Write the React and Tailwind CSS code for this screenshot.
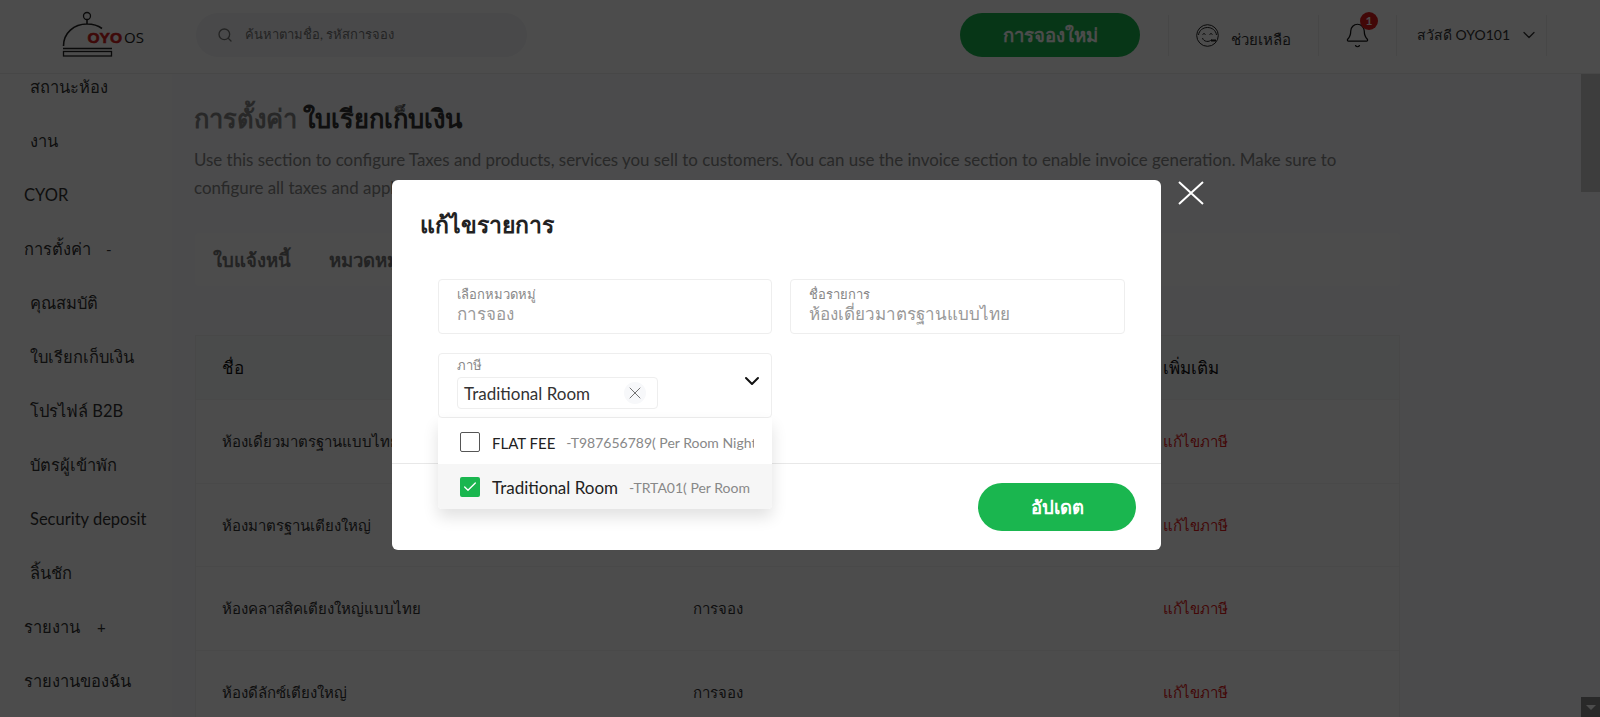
import React from "react";
import { Search, ChevronDown, X, Check, Bell } from "lucide-react";

const F = { fontFamily: '"Lato","Noto Sans","Noto Sans CJK SC",sans-serif' };
const side = [
  ["สถานะห้อง", 1], ["งาน", 1], ["CYOR", 0], ["การตั้งค่า", 0, "-", "ml-[15px]"], ["คุณสมบัติ", 1], ["ใบเรียกเก็บเงิน", 1],
  ["โปรไฟล์ B2B", 1], ["บัตรผู้เข้าพัก", 1], ["Security deposit", 1], ["ลิ้นชัก", 1], ["รายงาน", 0, "+", "ml-[17px]"], ["รายงานของฉัน", 0],
];
const rows = ["ห้องเดี่ยวมาตรฐานแบบไทย", "ห้องมาตรฐานเตียงใหญ่", "ห้องคลาสสิคเตียงใหญ่แบบไทย", "ห้องดีลักซ์เตียงใหญ่"];

function Logo() {
  return (
    <svg width="96" height="60" viewBox="0 0 96 60" className="shrink-0">
      <circle cx="27" cy="11" r="3.5" fill="none" stroke="#222" strokeWidth="1.3" />
      <path d="M27 14.500v4.500M3.500 41C3.500 28 14 19 27 19c6 0 11 1.500 15 4.500" fill="none" stroke="#222" strokeWidth="1.6" />
      <path d="M3 43.500h49" stroke="#222" strokeWidth="1.6" />
      <rect x="3.500" y="46.500" width="48" height="4.500" fill="none" stroke="#222" strokeWidth="1.3" />
      <text x="27.500" y="37.500" fontSize="15.500" fontWeight="700" fill="#d01f1f" stroke="#d01f1f" strokeWidth="0.6" fontFamily="Liberation Sans">OYO</text>
      <text x="64" y="38" fontSize="15" fill="#222" fontFamily="Open Sans">OS</text>
    </svg>
  );
}

export default function App() {
  return (
    <div style={F} className="relative h-[717px] w-[1600px] overflow-hidden bg-[#fafbfd] text-[#333]">
      <header className="relative z-10 flex h-[74px] items-center border-b border-[#eee] bg-white pb-[3px]">
        <div className="ml-[60px] flex w-[136px] shrink-0"><Logo /></div>
        <div className="flex h-[44px] w-[331px] items-center rounded-full bg-[#f4f5f7] pl-[21px] text-[#777]">
          <Search size={16} />
          <span className="ml-[12px] text-[13px]">ค้นหาตามชื่อ, รหัสการจอง</span>
        </div>
        <div className="ml-[433px] flex h-[44px] w-[180px] items-center justify-center rounded-full bg-[#1ab64f] pt-[1px] text-[18.500px] font-bold text-white">การจองใหม่</div>
        <div className="ml-[28px] flex h-[41px] w-[151px] items-center gap-[12px] border-x border-[#eee] pl-[27px]">
          <svg width="23" height="23" viewBox="0 0 23 23" fill="none" stroke="#222" strokeWidth="1">
            <circle cx="11.500" cy="11.500" r="10.800" />
            <path d="M2.500 11C3 6.500 7 3.500 11.500 3.500S20 6.500 20.500 11" />
            <path d="M6.500 10.500q1.500-2 3 0M13.500 10.500q1.500-2 3 0M6.500 14c1 4 7 4.500 9 1.500" />
            <path d="M15 16.500h5" strokeWidth="2" />
          </svg>
          <span className="mt-[8px] text-[15px]">ช่วยเหลือ</span>
        </div>
        <div className="relative flex h-[41px] w-[77px] items-center justify-center">
          <Bell size={27} strokeWidth={1.1} color="#111" />
          <span className="absolute left-[41px] top-[-3px] flex h-[18px] w-[18px] items-center justify-center rounded-full bg-[#dd1c1c] text-[12px] font-bold text-white">1</span>
        </div>
        <div className="flex h-[41px] w-[151px] items-center gap-[9px] border-x border-[#eee] pl-[20px] text-sm">
          <span>สวัสดี OYO101</span>
          <ChevronDown size={20} strokeWidth={1.5} />
        </div>
      </header>

      <div className="flex h-[643px]">
        <aside className="w-[172px] shrink-0 overflow-hidden bg-white">
          <div className="-mt-[14px]">
            {side.map(([t, sub, mark, gap]) => (
              <div key={t} className={`flex h-[54px] items-center text-[16.500px] ${sub ? "pl-[30px]" : "pl-[24px]"}`}>
                <span>{t}</span>
                {mark ? <span className={`${gap} text-[15px]`}>{mark}</span> : null}
              </div>
            ))}
          </div>
        </aside>
        <main className="min-w-0 flex-1 overflow-hidden pl-[22px]">
          <h1 className="mt-[25px] text-[25.500px] font-bold leading-[38px]"><span className="text-[#888]">การตั้งค่า</span> <span>ใบเรียกเก็บเงิน</span></h1>
          <p className="mt-[9px] w-[1170px] text-[16.900px] leading-[28px] text-[#888]">Use this section to configure Taxes and products, services you sell to customers. You can use the invoice section to enable invoice generation. Make sure to configure all taxes and applicable products.</p>
          <div className="ml-[1px] mt-[31px] flex h-[53px] w-[1205px] items-center gap-[38px] rounded bg-white pl-[18px] pt-[3px] text-[18.500px] font-bold text-[#777]">
            <span>ใบแจ้งหนี้</span><span>หมวดหมู่</span>
          </div>
          <div className="ml-[1px] mt-[49px] w-[1205px] border border-[#f2f2f2] bg-white">
            <div className="grid h-[63px] grid-cols-[471px_470px_1fr] items-center bg-[#f9fafb] pl-[26px] text-[17px] text-[#111]">
              <span>ชื่อ</span><span>หมวดหมู่</span><span>เพิ่มเติม</span>
            </div>
            {rows.map((r) => (
              <div key={r} className="grid h-[83.500px] grid-cols-[471px_470px_1fr] items-center border-t border-[#f4f4f4] pl-[26px] text-[15px]">
                <span>{r}</span><span>การจอง</span><span className="text-[#e01c1c]">แก้ไขภาษี</span>
              </div>
            ))}
          </div>
        </main>
        <div className="flex w-[19px] shrink-0 flex-col bg-[#fafbfd]">
          <div className="h-[118px] bg-[#cccccc]" />
          <div className="flex-1" />
          <div className="flex h-[20px] items-center justify-center bg-[#8b8b8b]"><div className="h-0 w-0 border-x-[5px] border-t-[5px] border-x-transparent border-t-white" /></div>
        </div>
      </div>

      <div className="absolute inset-0 z-20 bg-black/70" />

      <button className="absolute left-[1178px] top-[181px] z-30 text-white">
        <svg width="26" height="24" viewBox="0 0 26 24" fill="none" stroke="currentColor" strokeWidth="2"><path d="M1 1l24 22M25 1L1 23" /></svg>
      </button>
      <section className="absolute left-[392px] top-[180px] z-30 flex h-[370px] w-[769px] flex-col rounded-[6px] bg-white">
        <h2 className="ml-[28px] mt-[27px] text-[23px] font-bold leading-[34px] text-[#222]">แก้ไขรายการ</h2>
        <div className="ml-[46px] mt-[38px] grid w-[687px] grid-cols-[334px_335px] gap-x-[18px] gap-y-[19px]">
          <div className="h-[55px] rounded border border-[#eee] pl-[18px] pt-[5px]">
            <div className="text-[13px] leading-[18px] text-[#888]">เลือกหมวดหมู่</div>
            <div className="text-[17px] leading-[22px] text-[#999]">การจอง</div>
          </div>
          <div className="h-[55px] rounded border border-[#eee] pl-[18px] pt-[5px]">
            <div className="text-[13px] leading-[18px] text-[#888]">ชื่อรายการ</div>
            <div className="text-[17px] leading-[22px] text-[#999]">ห้องเดี่ยวมาตรฐานแบบไทย</div>
          </div>
          <div className="relative h-[65px] rounded border border-[#eee] pl-[18px]">
            <div className="mt-[2px] text-[13px] leading-[18px] text-[#888]">ภาษี</div>
            <div className="mt-[3px] flex h-[32px] w-[201px] items-center rounded border border-[#eee] pl-[6px] text-[17px] text-[#333]">
              <span className="mt-[1px]">Traditional Room</span>
              <span className="ml-auto mr-[11px] flex h-[22px] w-[22px] items-center justify-center rounded-full bg-[#f7f8fa] text-[#666]"><X size={20} strokeWidth={1.1} /></span>
            </div>
            <ChevronDown size={24} strokeWidth={2} className="absolute right-[7px] top-[15px] text-[#111]" />
          </div>
        </div>
        <div className="mt-[45px] flex flex-1 items-center justify-end border-t border-[#e8e8e8] pr-[25px]">
          <button className="h-[48px] w-[158px] rounded-full bg-[#1ab64f] pt-[2px] text-[18.500px] font-bold text-white">อัปเดต</button>
        </div>
        <div className="absolute left-[46px] top-[238px] w-[334px] overflow-hidden rounded-b bg-white shadow-[0_8px_16px_rgba(0,0,0,0.12)]">
          <div className="flex h-[46px] items-center pl-[22px] pt-[2px]">
            <span className="h-[20px] w-[20px] shrink-0 rounded-[2px] border border-[#555] bg-white" />
            <span className="ml-[12px] mt-[2px] whitespace-nowrap text-[15px] text-[#222]">FLAT FEE</span>
            <span className="ml-[11px] mt-[2px] w-[188px] overflow-hidden whitespace-nowrap text-sm text-[#888]">-T987656789( Per Room Night )</span>
          </div>
          <div className="flex h-[45px] items-center bg-[#f6f6f6] pl-[22px]">
            <span className="flex h-[20px] w-[20px] shrink-0 items-center justify-center rounded-[2px] bg-[#1ab64f] text-white"><Check size={16} strokeWidth={2} /></span>
            <span className="ml-[12px] mt-[2px] whitespace-nowrap text-[17px] text-[#222]">Traditional Room</span>
            <span className="ml-[11px] mt-[2px] w-[124px] overflow-hidden whitespace-nowrap text-sm text-[#888]">-TRTA01( Per Room Night )</span>
          </div>
        </div>
      </section>
    </div>
  );
}
